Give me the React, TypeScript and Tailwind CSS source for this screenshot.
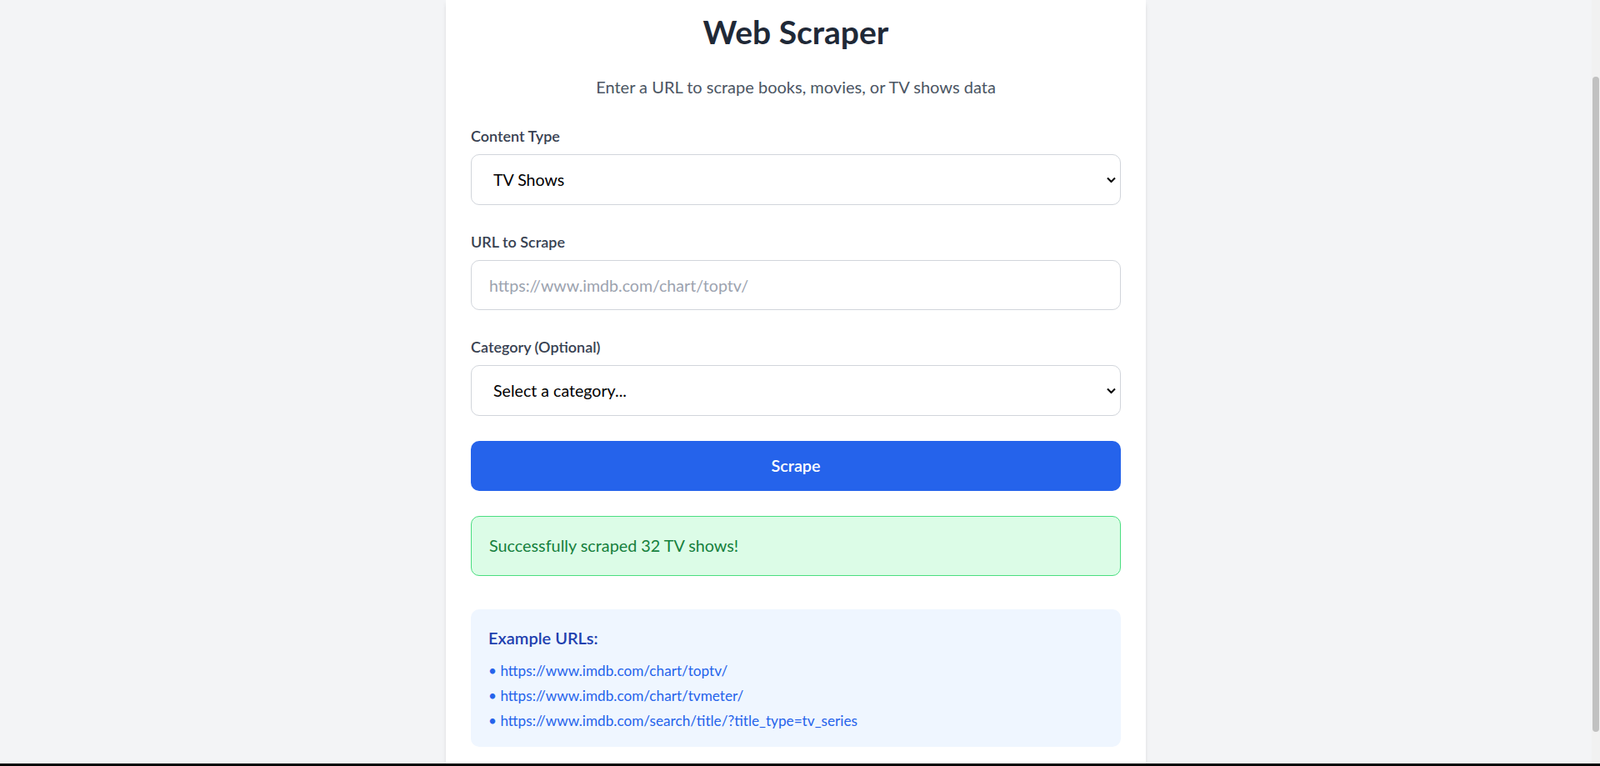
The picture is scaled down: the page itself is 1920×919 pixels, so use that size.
import { useState } from 'react'

const exampleUrls = [
  'https://www.imdb.com/chart/toptv/',
  'https://www.imdb.com/chart/tvmeter/',
  'https://www.imdb.com/search/title/?title_type=tv_series',
]

function Chevron() {
  return (
    <svg
      className="pointer-events-none absolute right-[6px] top-1/2 h-[7px] w-[11px] -translate-y-1/2"
      viewBox="0 0 11 7"
      fill="none"
    >
      <polyline points="1,1 5.5,5.5 10,1" stroke="#000" strokeWidth="2" />
    </svg>
  )
}

function Field({ label, children }: { label: string; children: React.ReactNode }) {
  return (
    <div>
      <label className="mb-[10px] block text-[18px] font-semibold leading-[24px] text-[#374151]">
        {label}
      </label>
      {children}
    </div>
  )
}

export default function App() {
  const [contentType, setContentType] = useState('tv')
  const [url, setUrl] = useState('')
  const [category, setCategory] = useState('')

  return (
    <div
      className="flex h-[919px] flex-col overflow-hidden bg-[#f3f4f6]"
      style={{ fontFamily: 'Lato, "Noto Sans", sans-serif' }}
    >
      <div className="flex min-h-0 flex-1">
        <main className="flex min-w-0 flex-1 justify-center overflow-hidden">
          <div className="w-[840px] bg-white px-[30px] pt-[15px] shadow-md">
            <h1 className="text-center text-[39px] font-bold leading-[47px] text-[#1f2937]">
              Web Scraper
            </h1>
            <p className="mt-[28px] text-center text-[20px] leading-[29px] text-[#4b5563]">
              Enter a URL to scrape books, movies, or TV shows data
            </p>

            <form className="mt-[32px] flex flex-col gap-[32px]" onSubmit={(e) => e.preventDefault()}>
              <Field label="Content Type">
                <div className="relative">
                  <select
                    value={contentType}
                    onChange={(e) => setContentType(e.target.value)}
                    className="block h-[61px] w-full appearance-none rounded-[10px] border border-[#d1d5db] bg-white pl-[26px] text-[19.6px] text-black outline-none"
                  >
                    <option value="books">Books</option>
                    <option value="movies">Movies</option>
                    <option value="tv">TV Shows</option>
                  </select>
                  <Chevron />
                </div>
              </Field>

              <Field label="URL to Scrape">
                <input
                  value={url}
                  onChange={(e) => setUrl(e.target.value)}
                  placeholder="https://www.imdb.com/chart/toptv/"
                  className="block h-[60px] w-full rounded-[10px] border border-[#d1d5db] px-[21px] text-[19.6px] text-black outline-none placeholder:text-[#9ca3af]"
                />
              </Field>

              <Field label="Category (Optional)">
                <div className="relative">
                  <select
                    value={category}
                    onChange={(e) => setCategory(e.target.value)}
                    className="block h-[61px] w-full appearance-none rounded-[10px] border border-[#d1d5db] bg-white pl-[26px] text-[19.6px] text-black outline-none"
                  >
                    <option value="">Select a category...</option>
                    <option value="drama">Drama</option>
                    <option value="comedy">Comedy</option>
                  </select>
                  <Chevron />
                </div>
              </Field>
            </form>

            <button
              type="button"
              className="mt-[30px] block h-[60px] w-full rounded-[10px] bg-[#2563eb] text-[19.8px] font-semibold text-white"
            >
              Scrape
            </button>

            <div className="mt-[30px] flex h-[72px] items-center rounded-[10px] border border-[#4ade80] bg-[#dcfce7] px-[21px] text-[19.8px] text-[#15803d]">
              Successfully scraped 32 TV shows!
            </div>

            <div className="mt-[40px] rounded-[10px] bg-[#eff6ff] px-[21px] pb-[19px] pt-[20px]">
              <h3 className="mb-[12px] text-[20px] font-semibold leading-[29px] text-[#1e40af]">
                Example URLs:
              </h3>
              <ul className="flex flex-col gap-[5px] text-[17.2px] leading-[25px] text-[#2563eb]">
                {exampleUrls.map((u) => (
                  <li key={u}>• {u}</li>
                ))}
              </ul>
            </div>
          </div>
        </main>

        <div className="flex w-[10px] flex-col items-center bg-[#f1f1f1] pt-[92px]">
          <div className="h-[786px] w-[8px] rounded-full bg-[#c1c1c1]" />
        </div>
      </div>
      <div className="h-[3px] bg-black" />
    </div>
  )
}
